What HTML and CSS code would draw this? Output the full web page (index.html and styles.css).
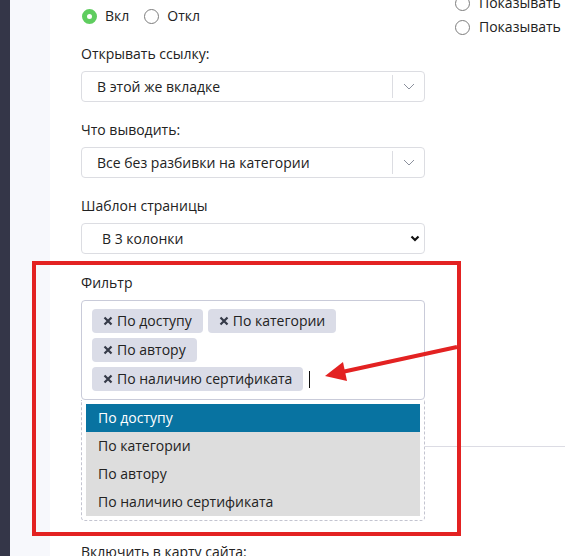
FILE: index.html
```html
<!DOCTYPE html>
<html lang="ru">
    <head>
        <meta charset="UTF-8">
        <meta name="viewport" content="width=device-width, initial-scale=1.0">
        <title>Настройки раздела</title>
        <link rel="stylesheet" href="styles.css">
    </head>
    <body>
        <div class="sidebar"></div>
        <div class="rail"></div>

        <div class="content">
            <div class="main">
                <div class="radios">
                    <label class="radio"><span class="dot on"></span>Вкл</label>
                    <label class="radio"><span class="dot"></span>Откл</label>
                </div>

                <div class="field">
                    <div class="label">Открывать ссылку:</div>
                    <div class="choice">
                        <span>В этой же вкладке</span>
                        <span class="arrow">
                            <svg width="12" height="7" viewBox="0 0 12 7"><polyline points="1,1 6,6 11,1" fill="none" stroke="#8b909c" stroke-width="1"/></svg>
                        </span>
                    </div>
                </div>

                <div class="field">
                    <div class="label">Что выводить:</div>
                    <div class="choice">
                        <span>Все без разбивки на категории</span>
                        <span class="arrow">
                            <svg width="12" height="7" viewBox="0 0 12 7"><polyline points="1,1 6,6 11,1" fill="none" stroke="#8b909c" stroke-width="1"/></svg>
                        </span>
                    </div>
                </div>

                <div class="field">
                    <div class="label">Шаблон страницы</div>
                    <div class="native">
                        <span>В 3 колонки</span>
                        <svg width="10" height="7" viewBox="0 0 10 7"><polyline points="1.5,1.5 5,5 8.5,1.5" fill="none" stroke="#111" stroke-width="2.2"/></svg>
                    </div>
                </div>

                <div class="field filter">
                    <div class="label">Фильтр</div>
                    <div class="tags">
                        <span class="tag"><svg class="x" width="10" height="10" viewBox="0 0 10 10"><path d="M1.5 1.5L8.5 8.5M8.5 1.5L1.5 8.5" stroke="#353a48" stroke-width="2.2"/></svg>По доступу</span>
                        <span class="tag"><svg class="x" width="10" height="10" viewBox="0 0 10 10"><path d="M1.5 1.5L8.5 8.5M8.5 1.5L1.5 8.5" stroke="#353a48" stroke-width="2.2"/></svg>По категории</span>
                        <span class="tag"><svg class="x" width="10" height="10" viewBox="0 0 10 10"><path d="M1.5 1.5L8.5 8.5M8.5 1.5L1.5 8.5" stroke="#353a48" stroke-width="2.2"/></svg>По автору</span>
                        <span class="tag"><svg class="x" width="10" height="10" viewBox="0 0 10 10"><path d="M1.5 1.5L8.5 8.5M8.5 1.5L1.5 8.5" stroke="#353a48" stroke-width="2.2"/></svg>По наличию сертификата</span>
                        <span class="search"><i class="caret"></i></span>
                    </div>
                    <ul class="options">
                        <li class="active">По доступу</li>
                        <li>По категории</li>
                        <li>По автору</li>
                        <li>По наличию сертификата</li>
                    </ul>
                </div>
            </div>

            <div class="side">
                <label class="radio"><span class="dot"></span>Показывать</label>
                <label class="radio"><span class="dot"></span>Показывать</label>
            </div>

            <hr class="sep">

            <div class="label next">Включить в карту сайта:</div>
        </div>

        <!-- note frame and pointer -->
        <div class="frame"></div>
        <svg class="pointer" width="565" height="556" viewBox="0 0 565 556">
            <line x1="457" y1="347" x2="342" y2="372" stroke="#e32222" stroke-width="4"/>
            <polygon points="325,376 343,362 347,381" fill="#e32222"/>
        </svg>
    </body>
</html>
```

FILE: styles.css
```css
body {
    margin: 0;
    height: 556px;
    display: flex;
    overflow: hidden;
    font-family: "Open Sans", "Liberation Sans", sans-serif;
    font-size: 14px;
    color: #222;
    position: relative;
}
.sidebar {
    width: 10px;
    flex: none;
    background: #343648;
}
.rail {
    width: 40px;
    flex: none;
    background: #f7f8fc;
}
.content {
    flex: 1;
    display: grid;
    grid-template-columns: 344px 1fr;
    column-gap: 30px;
    align-items: start;
    padding: 6px 0 0 31px;
    white-space: nowrap;
    min-width: 0;
}

/* radios */
.radios {
    display: flex;
    gap: 15px;
    height: 20px;
    align-items: center;
    padding-left: 1px;
}
.radio {
    display: flex;
    align-items: center;
    gap: 8px;
    line-height: 20px;
}
.dot {
    width: 15px;
    height: 15px;
    box-sizing: border-box;
    border: 1px solid #7d7d7d;
    border-radius: 50%;
    flex: none;
}
.dot.on {
    border: 5px solid #5fcd5f;
    background: #fff;
}
.side {
    margin-top: -15px;
    overflow: hidden;
}
.side .radio {
    line-height: 24px;
    gap: 9px;
}

/* fields */
.field {
    margin-top: 18px;
}
.label {
    line-height: 20px;
    margin-bottom: 7px;
}
.choice, .native {
    height: 31px;
    box-sizing: border-box;
    border: 1px solid #dcdde2;
    border-radius: 4px;
    display: flex;
    align-items: center;
}
.choice span:first-child {
    flex: 1;
    padding-left: 15px;
}
.choice .arrow {
    width: 31px;
    height: 23px;
    border-left: 1px solid #dcdde2;
    display: flex;
    align-items: center;
    justify-content: center;
}
.native {
    padding: 0 4px 0 20px;
    justify-content: space-between;
}

/* tag input */
.filter {
    position: relative;
    margin-top: 19px;
}
.tags {
    height: 100px;
    box-sizing: border-box;
    border: 1px solid #c9cbd9;
    border-radius: 4px;
    padding: 8px 20px 8px 10px;
    display: flex;
    flex-wrap: wrap;
    align-content: flex-start;
    gap: 5px;
}
.tag {
    height: 24px;
    line-height: 24px;
    background: #dadce7;
    border-radius: 4px;
    padding: 0 11px;
    display: flex;
    align-items: center;
}
.tag .x {
    margin-right: 4px;
}
.search {
    width: 40px;
    height: 24px;
    display: flex;
    align-items: center;
    padding-left: 1px;
}
.caret {
    width: 1px;
    height: 17px;
    background: #111;
}
.options {
    position: absolute;
    top: 127px;
    left: 0;
    right: 0;
    margin: 0;
    padding: 4px;
    list-style: none;
    background: #fff;
    border: 1px dashed #c3c4d0;
    border-top: none;
    border-radius: 0 0 4px 4px;
    z-index: 2;
}
.options li {
    height: 28px;
    line-height: 28px;
    padding-left: 12px;
    background: #dddddd;
}
.options li.active {
    background: #0873a1;
    color: #fff;
}

.sep {
    grid-column: 1 / -1;
    margin: 46px 0 0;
    border: none;
    border-top: 1px solid #dcdce4;
}
.next {
    grid-column: 1 / -1;
    margin-top: 95px;
}

/* red note over the filter */
.frame {
    position: absolute;
    left: 32px;
    top: 261px;
    width: 421px;
    height: 267px;
    border: 4px solid #e32222;
    z-index: 3;
}
.pointer {
    position: absolute;
    left: 0;
    top: 0;
    z-index: 3;
}
```
